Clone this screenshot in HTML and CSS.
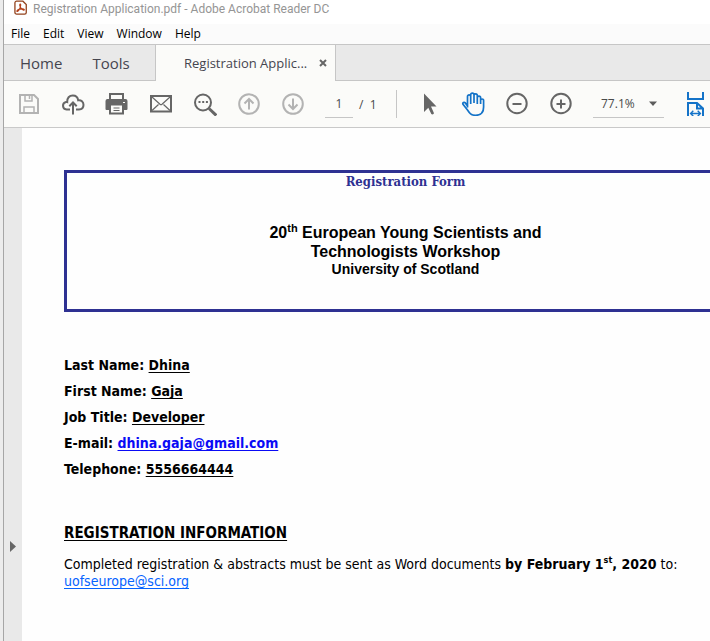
FILE: index.html
```html
<!DOCTYPE html>
<html lang="en">
<head>
<meta charset="utf-8">
<title>Registration Application.pdf - Adobe Acrobat Reader DC</title>
<link rel="stylesheet" href="styles.css">
</head>
<body>
<div class="window">
  <header class="titlebar">
    <svg class="app-icon" viewBox="0 0 14 16" aria-hidden="true">
      <path d="M3 .7h6.600L13.200 4.200V12.800a1.800 1.800 0 0 1-1.800 1.800H2.800A1.800 1.800 0 0 1 1 12.800V2.500A1.800 1.800 0 0 1 3 .7z" fill="#fff" stroke="#93421c" stroke-width="1.400"/>
      <path d="M6.800 3.800c-1.300.2-.3 3 1 4.700 1.300 1.600 3 2.300 3.300 1.400.3-1-3-1.300-5-.7-2 .6-3.400 1.700-3 2.400.6.800 2.200-1 3.100-3 .8-1.800 1.500-4.700.6-4.800z" fill="none" stroke="#b5411a" stroke-width="1.200"/>
    </svg>
    <span>Registration Application.pdf - Adobe Acrobat Reader DC</span>
  </header>
  <nav class="menubar">
    <button>File</button><button>Edit</button><button>View</button><button>Window</button><button>Help</button>
  </nav>
  <div class="tabs">
    <div class="tabs-fixed"><button>Home</button><button>Tools</button></div>
    <div class="tab">
      <span>Registration Applic...</span>
      <button class="close" aria-label="Close tab"><svg viewBox="0 0 8 8"><path d="M1 1l6 6M7 1L1 7" fill="none" stroke="#666" stroke-width="2"/></svg></button>
    </div>
    <div class="tabs-rest"></div>
  </div>
  <div class="toolbar">
    <button class="tool muted" aria-label="Save"><svg viewBox="0 0 24 24"><path d="M3 3h14l4 4v14H3z"/><path d="M8 3v6h7V3M12.500 4v3M7 21v-6h10v6" stroke-width="1.500"/></svg></button>
    <button class="tool" aria-label="Upload"><svg viewBox="0 0 24 24"><path d="M9 17.500H5.500a3.800 3.800 0 0 1-.5-7.500c.4 0 .8 0 1.200.1C6 6 8.300 3.500 11.800 3.500c3 0 5 1.800 5.400 4.800 3-.5 5.300 1.600 5.300 4.500 0 2.800-1.800 4.700-4.500 4.700h-3M12 22.500V11M8.300 14.200L12 10.500l3.700 3.700"/></svg></button>
    <button class="tool" aria-label="Print"><svg viewBox="0 0 24 24"><path d="M5 7V2h13v5"/><path class="solid" d="M2.500 7h18q2 0 2 2v8q0 1-1 1h-2.500v4.500H4V18H1.500q-1 0-1-1V9q0-2 2-2z"/><path d="M6 13.500h11v7H6z" fill="#fbfbf9" stroke="none"/><path d="M8.500 16h6M8.500 18.500h6" stroke-width="1"/><path d="M18 10.500h2" stroke="#fbfbf9" stroke-width="1"/></svg></button>
    <button class="tool" aria-label="Email"><svg viewBox="0 0 24 24"><path d="M2 4h20v15.500H2z"/><path d="M3 5l8 7.300q1 .8 2 0L21 5M3 18.500l6.500-6M21 18.500l-6.500-6" stroke-width="1.200"/></svg></button>
    <button class="tool" aria-label="Find"><svg viewBox="0 0 24 24"><circle cx="10" cy="10.500" r="8"/><path d="M16 16.500l7.300 7" stroke-width="3"/><path d="M5.500 10h2M9.200 10h2M12.900 10h2"/></svg></button>
    <button class="tool muted" aria-label="Previous page"><svg viewBox="0 0 24 24"><circle cx="12" cy="12" r="9.800"/><path d="M12 17.500V7.500M7.500 11.500L12 7l4.500 4.500"/></svg></button>
    <button class="tool muted" aria-label="Next page"><svg viewBox="0 0 24 24"><circle cx="12" cy="12" r="9.800"/><path d="M12 6.500v10M7.500 12.500L12 17l4.500-4.500"/></svg></button>
    <input class="page-number" aria-label="Page number" value="1">
    <span class="page-total">/&nbsp; 1</span>
    <span class="divider"></span>
    <button class="tool" aria-label="Select"><svg viewBox="0 0 24 24"><path class="solid" d="M7 1.500v18.500l4.300-4.200 3 6.200q1 .8 2.200 0 .6-.6.300-1.300L14 14.500h5.500z"/></svg></button>
    <button class="tool active" aria-label="Pan"><svg viewBox="0 0 24 24"><path d="M6.500 15.500V4.500a1.600 1.600 0 0 1 3.200 0V12M9.700 11V2.800a1.600 1.600 0 0 1 3.300 0V11M13 11V3.500a1.600 1.600 0 0 1 3.300 0V12M16.300 12V5.800a1.600 1.600 0 0 1 3.300 0V11M19.600 12V8.500a1.500 1.500 0 0 1 3 0V15c0 5-2.500 8.300-8 8.300-4.600 0-6-2-8.300-5.500L2 12.400c-.8-1.700 1.200-2.800 2.300-1.500l2.200 3" stroke-width="1.700"/></svg></button>
    <button class="tool" aria-label="Zoom out"><svg viewBox="0 0 24 24"><circle cx="12" cy="11.500" r="9.700"/><path d="M7.500 12h9"/></svg></button>
    <button class="tool" aria-label="Zoom in"><svg viewBox="0 0 24 24"><circle cx="12" cy="11.500" r="9.700"/><path d="M7.500 12h9M12 7.500v9"/></svg></button>
    <label class="zoom">
      <select aria-label="Zoom level"><option>77.1%</option></select>
      <svg viewBox="0 0 8 5"><path d="M0 .5h8L4 5z" fill="#5c5c5c"/></svg>
    </label>
    <button class="tool active" aria-label="Fit width"><svg viewBox="0 0 24 24"><path d="M5 0v7h15V0M5 24V11h9l6 5.500V24M14 11v5.500h6"/><path d="M8 21.500h9M10.300 18.800L7.600 21.500l2.700 2.700M14.700 18.800l2.700 2.700-2.700 2.700" stroke-width="1.400"/></svg></button>
  </div>
  <div class="workspace">
    <button class="pane-toggle" aria-label="Open navigation pane"><svg viewBox="0 0 6 11"><path d="M0 0l6 5.500L0 11z" fill="#666"/></svg></button>
    <main class="document">
      <section class="banner">
        <p class="form-name">Registration Form</p>
        <h1>20<sup>th</sup> European Young Scientists and<br>Technologists Workshop</h1>
        <p class="host">University of Scotland</p>
      </section>
      <section class="details">
        <p>Last Name: <u>Dhina</u></p>
        <p>First Name: <u>Gaja</u></p>
        <p>Job Title: <u>Developer</u></p>
        <p>E-mail: <a href="mailto:dhina.gaja@gmail.com">dhina.gaja@gmail.com</a></p>
        <p>Telephone: <u>5556664444</u></p>
      </section>
      <section class="info">
        <h2>REGISTRATION INFORMATION</h2>
        <p>Completed registration &amp; abstracts must be sent as Word documents <b>by February 1<sup>st</sup>, 2020</b> to:<br><a href="mailto:uofseurope@sci.org">uofseurope@sci.org</a></p>
      </section>
    </main>
  </div>
</div>
</body>
</html>
```
FILE: styles.css
```css
* { box-sizing: border-box; }
body {
  margin: 0;
  background: #ececec;
  font-family: "Open Sans", "Noto Sans", sans-serif;
  font-size: 12px;
  color: #000;
}
button, input, select {
  font: inherit;
  color: inherit;
  background: none;
  border: 0;
  padding: 0;
  margin: 0;
}
h1, h2, p { margin: 0; }
sup { line-height: 0; }

.window {
  display: flex;
  flex-direction: column;
  min-height: 100vh;
  margin-left: 3px;
  border-left: 1px solid #a6a6a6;
  background: #fff;
  overflow: hidden;
}
.titlebar {
  display: flex;
  align-items: flex-start;
  gap: 6px;
  height: 24px;
  padding-left: 10px;
  font-family: Roboto, "Open Sans", sans-serif;
  line-height: 18px;
  color: #959595;
  white-space: nowrap;
}
.app-icon { width: 13px; height: 16px; }
.menubar {
  display: flex;
  gap: 13px;
  height: 20px;
  padding-left: 7px;
  line-height: 20px;
  background: #fbfbfb;
}
.tabs {
  display: flex;
  height: 37px;
  border-top: 1px solid #c6c6c6;
  background: #fbfbf9;
  color: #45454f;
}
.tabs-fixed {
  display: flex;
  gap: 30px;
  width: 152px;
  padding-left: 16px;
  border-right: 1px solid #c6c6c6;
  border-bottom: 1px solid #c6c6c6;
  background: #e9e9e9;
  font-size: 15px;
}
.tab {
  display: flex;
  align-items: center;
  justify-content: space-between;
  width: 179px;
  padding: 0 8px 0 28px;
  font-size: 13px;
  white-space: nowrap;
}
.close { display: flex; }
.close svg { width: 8px; height: 8px; }
.tabs-rest {
  flex: 1;
  border-left: 1px solid #c6c6c6;
  border-bottom: 1px solid #c6c6c6;
  background: #e9e9e9;
}

.toolbar {
  display: flex;
  align-items: center;
  height: 47px;
  padding-left: 3px;
  border-bottom: 1px solid #c9c9c9;
  background: #fbfbf9;
  color: #4a4a4a;
}
.toolbar > * { flex-shrink: 0; }
.tool {
  display: flex;
  justify-content: center;
  width: 44px;
  color: #666;
}
.tool.muted { color: #b3b3b3; }
.tool.active { color: #1473c8; }
.tool svg {
  width: 24px;
  height: 24px;
  fill: none;
  stroke: currentColor;
  stroke-width: 2;
}
.tool .solid { fill: currentColor; stroke: none; }
.page-number {
  width: 28px;
  height: 28px;
  margin-left: 10px;
  border-bottom: 1px solid #c6c6c6;
  text-align: center;
}
.page-total { width: 37px; padding-left: 6px; }
.divider { width: 1px; height: 28px; margin: 0 10px 0 6px; background: #c6c6c6; }
.zoom {
  display: flex;
  align-items: center;
  width: 71px;
  height: 28px;
  margin: 0 9px 0 10px;
  border-bottom: 1px solid #c6c6c6;
}
.zoom select { appearance: none; width: 56px; padding-left: 8px; }
.zoom svg { width: 8px; height: 5px; }

.workspace { display: flex; flex: 1; }
.pane-toggle {
  display: flex;
  flex: 0 0 18px;
  padding: 413px 0 0 6px;
  background: #e9e9e9;
}
.pane-toggle svg { width: 6px; height: 11px; }
.document {
  flex: 1;
  min-width: 0;
  padding: 42px 0 40px 42px;
  background: #fefefe;
  font-family: "DejaVu Sans Condensed", "DejaVu Sans", sans-serif;
  font-size: 14px;
}
.banner {
  height: 142px;
  margin-right: -37px;
  border: 3px solid #2e3192;
  text-align: center;
  font-family: "Liberation Sans", sans-serif;
  font-weight: bold;
}
.form-name {
  margin-bottom: 32px;
  font-family: "DejaVu Serif Condensed", "DejaVu Serif", serif;
  font-size: 13px;
  line-height: 18px;
  color: #2e3192;
}
.banner h1 { font-size: 16px; line-height: 19px; }
.banner sup { font-size: 11px; }
.host { font-size: 14px; line-height: 17px; }
.details { margin-top: 40px; font-weight: bold; line-height: 26px; }
.details u, .details a, .info a, .info h2 { text-underline-offset: 2px; text-decoration-skip-ink: none; }
.details a { color: #0a0af5; }
.info { margin-top: 43px; line-height: 17px; }
.info h2 { margin-bottom: 14px; font-size: 15px; text-decoration: underline; }
.info sup { font-size: 9px; }
.info a { color: #0563ff; }
```
